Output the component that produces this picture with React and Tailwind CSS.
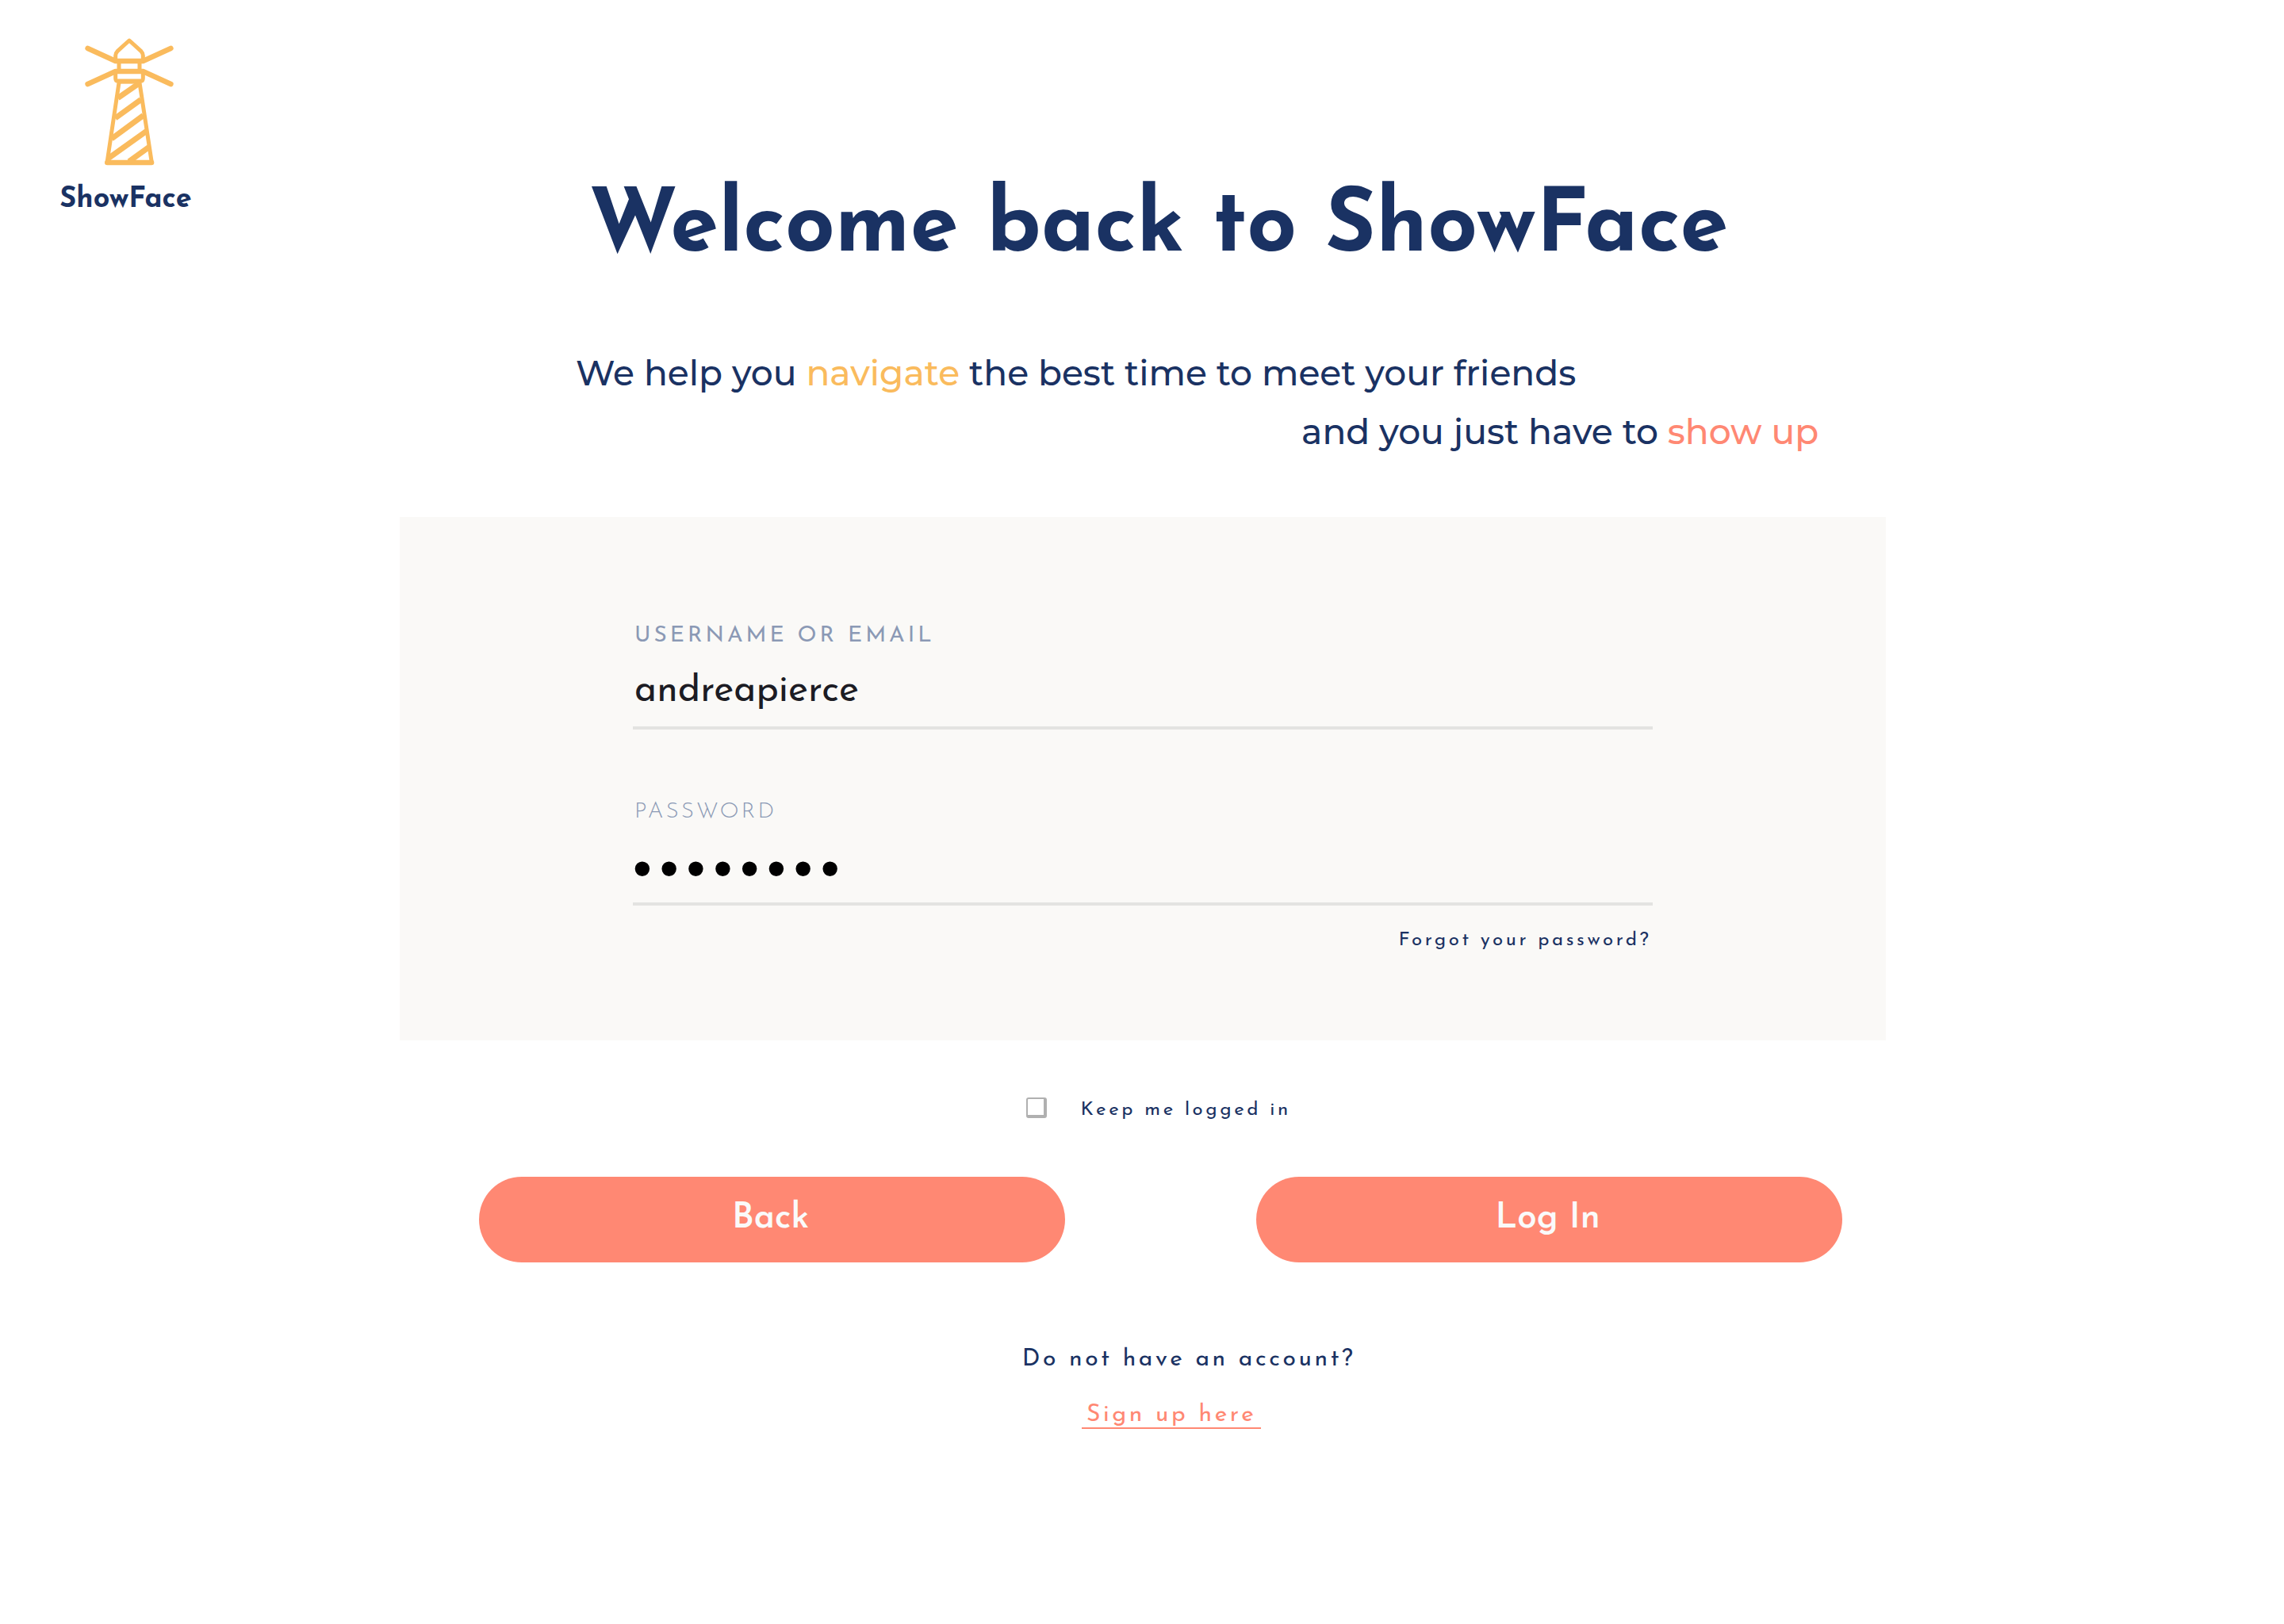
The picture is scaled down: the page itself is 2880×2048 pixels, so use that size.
function Lighthouse() {
  return (
    <svg
      viewBox="114 50 366 489"
      className="w-[122px] h-[163px]"
      fill="none"
      stroke="#fabb5d"
      strokeWidth="15"
      strokeLinejoin="round"
      aria-hidden="true"
    >
      <path d="M257 139V119Q257 110 264 103L309 62L354 103Q361 110 361 119V139" />
      <path d="M270 145V178M348 145V178" />
      <path d="M257 184V205Q257 216 268 216H350Q361 216 361 205V184" />
      <path d="M152 92L257 140H361L466 92M152 227L257 179H361L466 227" strokeWidth="20" strokeLinecap="round" />
      <path d="M266 217H352" strokeWidth="18" />
      <path d="M270 222L225 524M348 222L394 524" strokeLinecap="round" />
      <path d="M226 524H393" strokeWidth="20" strokeLinecap="round" />
      <path d="M266 280L345 225M256 356L353 286M242 434L362 346M230 508L374 405M308 520L384 465" strokeWidth="21" />
    </svg>
  );
}

function Field({ id, label, labelClass, inputClass, ...props }) {
  return (
    <div className="flex flex-col">
      <label htmlFor={id} className={`px-[2px] text-[28px] leading-[36px] text-[#8b99b5] ${labelClass}`}>
        {label}
      </label>
      <input
        id={id}
        className={`w-full h-[100px] pt-2 border-b-4 border-[#e3e3e1] bg-transparent outline-none ${inputClass}`}
        {...props}
      />
    </div>
  );
}

function PillButton({ type, children }) {
  return (
    <button
      type={type}
      className="w-[43%] h-[108px] pb-[2px] pr-1 rounded-full bg-[#ff8873] text-[44px] font-semibold text-[#fafafa]"
    >
      {children}
    </button>
  );
}

export default function App() {
  return (
    <div className="min-h-screen bg-white text-[#1a3263] font-['Josefin_Sans','Lato',sans-serif]">
      <header className="grid grid-cols-[300px_1fr_258px] pt-[47px]">
        <div className="w-[165px] ml-[76px] flex flex-col items-center gap-[20px]">
          <Lighthouse />
          <span className="text-[36px] leading-[44px] font-bold">ShowFace</span>
        </div>
        <h1 className="pt-[186px] text-center text-[110px] leading-[112px] font-bold">
          Welcome back to ShowFace
        </h1>
      </header>

      <main className="pl-[17.5%] pr-[17.42%]">
        <p className="mt-[88px] ml-[222px] mr-[85px] flex flex-col text-[44px] leading-[74px] font-medium font-['Montserrat','Inter',sans-serif]">
          <span>
            We help you <span className="text-[#fabb5d]">navigate</span> the best time to meet your friends
          </span>
          <span className="self-end">
            and you just have to <span className="text-[#ff8873]">show up</span>
          </span>
        </p>

        <form onSubmit={(e) => e.preventDefault()}>
          <div className="mt-[71px] pt-[132px] pb-[110px] px-[294px] bg-[#faf9f7] flex flex-col">
            <div className="flex flex-col gap-[86px]">
              <Field
                id="username"
                label="USERNAME OR EMAIL"
                labelClass="tracking-[4px]"
                inputClass="px-[2px] text-[48px] text-[#1c1c24]"
                type="text"
                defaultValue="andreapierce"
              />
              <Field
                id="password"
                label="PASSWORD"
                labelClass="font-[350] tracking-[3px]"
                inputClass="text-[68px] font-['Liberation_Sans',sans-serif] text-black tracking-[10px]"
                type="password"
                defaultValue="showface"
              />
            </div>
            <a href="#forgot" className="self-end mt-[28px] pr-[2px] text-[24px] leading-[32px] tracking-[0.15em]">
              Forgot your password?
            </a>
          </div>

          <div className="mt-[72px] pl-[40px] flex justify-center">
            <label className="flex items-center gap-[42px] text-[24px] leading-[32px] tracking-[0.15em]">
              <input
                type="checkbox"
                className="appearance-none size-[26px] mb-[6px] rounded-[3px] border-2 border-r-4 border-b-4 border-[#b0b0b0] bg-white"
              />
              Keep me logged in
            </label>
          </div>

          <div className="mt-[68px] ml-[100px] mr-[55px] flex justify-between">
            <PillButton type="button">Back</PillButton>
            <PillButton type="submit">Log In</PillButton>
          </div>
        </form>

        <div className="mt-[103px] pl-[72px] flex flex-col items-center gap-[30px] text-[30px] leading-[40px] tracking-[0.12em]">
          <p className="pl-[44px]">Do not have an account?</p>
          <a href="#signup" className="px-[6px] h-[37px] border-b-2 border-[#ff8873] text-[#ff8873]">
            Sign up here
          </a>
        </div>
      </main>
    </div>
  );
}
